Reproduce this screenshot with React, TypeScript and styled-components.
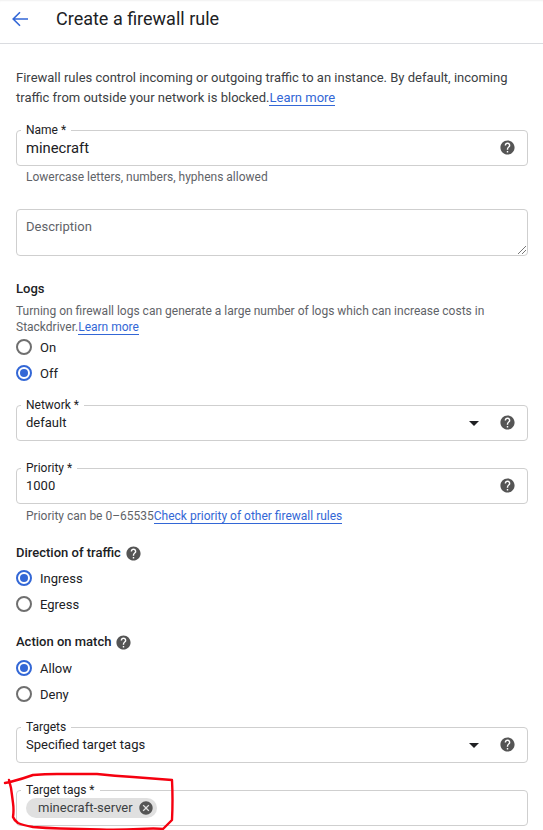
import React, { FC, ReactNode } from 'react';
import styled, { createGlobalStyle } from 'styled-components';

const GlobalStyle = createGlobalStyle`
  html, body {
    margin: 0;
    padding: 0;
    background: #ffffff;
  }
  body {
    font-family: Roboto, "Liberation Sans", sans-serif;
    color: #202124;
    overflow: hidden;
  }
`;

const Page = styled.div`
  position: relative;
  width: 543px;
  height: 830px;
  overflow: hidden;
`;

const Header = styled.header`
  display: flex;
  align-items: center;
  height: 44px;
  box-sizing: border-box;
  padding: 0 0 5px 12px;
  border-bottom: 1px solid #dadce0;
  box-shadow: inset 0 2px 2px -1px #f1f1f1;
`;

const BackIcon = styled.svg`
  width: 16px;
  height: 16px;
  margin: 0 28px 1px 0;
`;

const Title = styled.h1`
  margin: 0;
  font-size: 18px;
  font-weight: 400;
  line-height: 24px;
  color: #202124;
`;

const Content = styled.main`
  padding: 24px 15px 0 16px;
`;

const Intro = styled.p`
  margin: 0 0 22px;
  font-size: 13px;
  line-height: 20px;
  color: #3c4043;
`;

const LearnLink = styled.a`
  color: #3367d6;
  text-decoration: none;
  border-bottom: 1px solid #3367d6;
`;

const FieldBox = styled.div<{ $height: number; $gap: number }>`
  position: relative;
  display: flex;
  align-items: center;
  box-sizing: border-box;
  height: ${(p) => p.$height}px;
  margin-bottom: ${(p) => p.$gap}px;
  padding: 0 11px 0 9px;
  border: 1px solid #cfcfcf;
  border-radius: 4px;
`;

const FieldLabel = styled.span`
  position: absolute;
  top: -8px;
  left: 4px;
  padding: 0 5px;
  background: #ffffff;
  font-size: 12px;
  line-height: 14px;
  color: #202124;
`;

const FieldValue = styled.span<{ $size: number }>`
  flex: 1;
  font-size: ${(p) => p.$size}px;
  line-height: 20px;
  color: #202124;
`;

const HelpIcon = styled.svg<{ $inline?: boolean }>`
  width: 17px;
  height: 17px;
  flex-shrink: 0;
  margin-left: ${(p) => (p.$inline ? '4px' : '0')};
  margin-bottom: ${(p) => (p.$inline ? '0' : '2px')};
`;

const Caret = styled.span`
  width: 0;
  height: 0;
  margin-right: 20px;
  border-left: 5px solid transparent;
  border-right: 5px solid transparent;
  border-top: 5px solid #202124;
`;

const Hint = styled.div<{ $gap: number }>`
  margin: -1px 0 ${(p) => p.$gap}px 10px;
  font-size: 12px;
  line-height: 16px;
  color: #5f6368;
`;

const Placeholder = styled.span`
  font-size: 13px;
  line-height: 16px;
  color: #5f6368;
`;

const DescriptionBox = styled(FieldBox)`
  align-items: flex-start;
  padding-top: 9px;
`;

const ResizeGrip = styled.svg`
  position: absolute;
  right: 0;
  bottom: 0;
  width: 10px;
  height: 10px;
`;

const SectionTitle = styled.div<{ $gap: number }>`
  display: flex;
  align-items: center;
  margin-bottom: ${(p) => p.$gap}px;
  font-size: 13px;
  line-height: 18px;
  font-weight: 500;
  color: #202124;
`;

const SectionText = styled.p`
  margin: 0 0 3px;
  font-size: 12px;
  line-height: 16px;
  color: #5f6368;
`;

const RadioGroup = styled.div<{ $gap: number }>`
  display: flex;
  flex-direction: column;
  gap: 8px;
  margin-bottom: ${(p) => p.$gap}px;
`;

const RadioRow = styled.label`
  display: flex;
  align-items: center;
  height: 18px;
  font-size: 13px;
  color: #202124;
`;

const RadioCircle = styled.span<{ $checked?: boolean }>`
  display: inline-flex;
  align-items: center;
  justify-content: center;
  box-sizing: border-box;
  width: 16px;
  height: 16px;
  margin-right: 8px;
  border-radius: 50%;
  border: 2px solid ${(p) => (p.$checked ? '#3367d6' : '#6f6f6f')};

  &::after {
    content: '';
    display: ${(p) => (p.$checked ? 'block' : 'none')};
    width: 8px;
    height: 8px;
    border-radius: 50%;
    background: #3367d6;
  }
`;

const Chip = styled.span`
  display: inline-flex;
  align-items: center;
  height: 20px;
  margin-bottom: 1px;
  padding: 0 3px 0 12px;
  border-radius: 10px;
  background: #e0e0e0;
  font-size: 13px;
  color: #3c4043;
`;

const ChipIcon = styled.svg`
  width: 16px;
  height: 16px;
  margin-left: 5px;
`;

const Scribble = styled.svg`
  position: absolute;
  left: 0;
  top: 770px;
  width: 180px;
  height: 60px;
  pointer-events: none;
`;

const Help: FC<{ inline?: boolean }> = ({ inline }) => (
  <HelpIcon $inline={inline} viewBox="0 0 24 24" fill="#555555">
    <path d="M12 2C6.48 2 2 6.48 2 12s4.48 10 10 10 10-4.48 10-10S17.52 2 12 2zm1 17h-2v-2h2v2zm2.07-7.75l-.9.92C13.45 12.9 13 13.5 13 15h-2v-.5c0-1.1.45-2.1 1.17-2.83l1.24-1.26c.37-.36.59-.86.59-1.41 0-1.1-.9-2-2-2s-2 .9-2 2H8c0-2.21 1.79-4 4-4s4 1.79 4 4c0 .88-.36 1.68-.93 2.25z" />
  </HelpIcon>
);

interface FieldProps {
  label: string;
  value?: string;
  size?: number;
  gap: number;
  height?: number;
  select?: boolean;
  help?: boolean;
  children?: ReactNode;
}

const Field: FC<FieldProps> = ({
  label,
  value,
  size = 13,
  gap,
  height = 36,
  select,
  help = true,
  children,
}) => (
  <FieldBox $height={height} $gap={gap}>
    <FieldLabel>{label}</FieldLabel>
    {children ?? <FieldValue $size={size}>{value}</FieldValue>}
    {select && <Caret />}
    {help && <Help />}
  </FieldBox>
);

const Radio: FC<{ label: string; checked?: boolean }> = ({ label, checked }) => (
  <RadioRow>
    <RadioCircle $checked={checked} />
    {label}
  </RadioRow>
);

export default function App() {
  return (
    <Page>
      <GlobalStyle />
      <Header>
        <BackIcon viewBox="0 0 16 16" fill="none" stroke="#3367d6" strokeWidth="1.6">
          <path d="M16 8H1.5M8 1.2L1.2 8 8 14.8" />
        </BackIcon>
        <Title>Create a firewall rule</Title>
      </Header>
      <Content>
        <Intro>
          Firewall rules control incoming or outgoing traffic to an instance. By default, incoming
          traffic from outside your network is blocked.<LearnLink>Learn more</LearnLink>
        </Intro>
        <Field label="Name *" value="minecraft" size={14.8} gap={4} />
        <Hint $gap={24}>Lowercase letters, numbers, hyphens allowed</Hint>
        <DescriptionBox $height={47} $gap={24}>
          <Placeholder>Description</Placeholder>
          <ResizeGrip viewBox="0 0 10 10" stroke="#555" fill="none" strokeWidth="0.8">
            <path d="M1 9L9 1M5 9L9 5" />
          </ResizeGrip>
        </DescriptionBox>
        <SectionTitle $gap={5}>Logs</SectionTitle>
        <SectionText>
          Turning on firewall logs can generate a large number of logs which can increase costs in
          Stackdriver.<LearnLink>Learn more</LearnLink>
        </SectionText>
        <RadioGroup $gap={23}>
          <Radio label="On" />
          <Radio label="Off" checked />
        </RadioGroup>
        <Field label="Network *" value="default" select gap={27} />
        <Field label="Priority *" value="1000" gap={5} />
        <Hint $gap={20}>
          Priority can be 0–65535<LearnLink>Check priority of other firewall rules</LearnLink>
        </Hint>
        <SectionTitle $gap={7}>
          Direction of traffic <Help inline />
        </SectionTitle>
        <RadioGroup $gap={20}>
          <Radio label="Ingress" checked />
          <Radio label="Egress" />
        </RadioGroup>
        <SectionTitle $gap={8}>
          Action on match <Help inline />
        </SectionTitle>
        <RadioGroup $gap={24}>
          <Radio label="Allow" checked />
          <Radio label="Deny" />
        </RadioGroup>
        <Field label="Targets" value="Specified target tags" select gap={27} />
        <Field label="Target tags *" help={false} gap={0}>
          <Chip>
            minecraft-server
            <ChipIcon viewBox="0 0 24 24" fill="#555555">
              <path d="M12 2C6.47 2 2 6.47 2 12s4.47 10 10 10 10-4.47 10-10S17.53 2 12 2zm5 13.59L15.59 17 12 13.41 8.41 17 7 15.59 10.59 12 7 8.41 8.41 7 12 10.59 15.59 7 17 8.41 13.41 12 17 15.59z" />
            </ChipIcon>
          </Chip>
        </Field>
      </Content>
      <Scribble viewBox="0 0 180 60" fill="none" stroke="#f5000f" strokeWidth="2.4" strokeLinecap="round" strokeLinejoin="round">
        <path d="M5 13 L10 12 Q22 9 33 5 Q45 4 57 4 L97 4 Q115 6 133 7 L172 10 Q173 30 172 50 Q168 54 165 57 L163 59 Q155 58 140 59 Q120 60 100 59.5 Q80 59 60 58.5 Q45 58 33 57 Q22 55 18 53 Q14 50 13 47 Q14 40 13 33 Q12 25 11 18 L9 10" />
      </Scribble>
    </Page>
  );
}
